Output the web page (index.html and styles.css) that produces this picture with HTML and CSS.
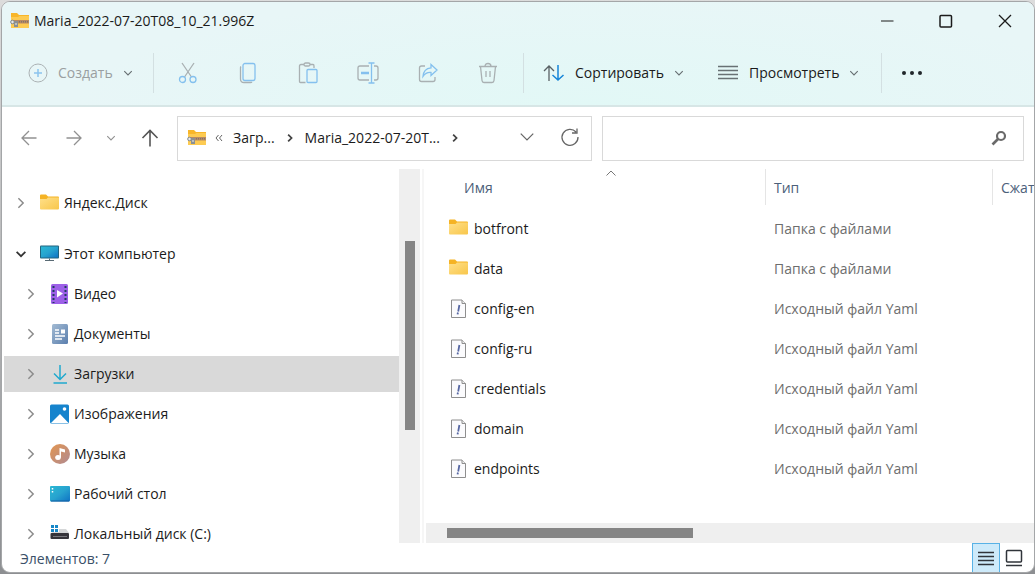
FILE: index.html
```html
<!DOCTYPE html>
<html lang="ru">
<head>
<meta charset="utf-8">
<title>Maria_2022-07-20T08_10_21.996Z</title>
<link rel="stylesheet" href="styles.css">
</head>
<body>
<svg class="defs" aria-hidden="true">
  <defs>
    <linearGradient id="g-folder" x1="0" y1="0" x2="1" y2="1"><stop offset="0" stop-color="#ffe08a"/><stop offset="1" stop-color="#f8c64a"/></linearGradient>
    <linearGradient id="g-screen" x1="0" y1="0" x2="1" y2="1"><stop offset="0" stop-color="#2bb8d4"/><stop offset=".5" stop-color="#27a3cf"/><stop offset="1" stop-color="#0f72c4"/></linearGradient>
    <linearGradient id="g-doc" x1="0" y1="0" x2="1" y2="1"><stop offset="0" stop-color="#a3bbd3"/><stop offset="1" stop-color="#5b7fae"/></linearGradient>
    <linearGradient id="g-music" x1="0" y1="0" x2="1" y2="1"><stop offset="0" stop-color="#e39650"/><stop offset="1" stop-color="#b08a92"/></linearGradient>
  </defs>
  <symbol id="folder" viewBox="0 0 20 16"><path d="M0 1.500Q0 .5 1 .5H6L8 2.500H18Q19 2.500 19 3.500V8H0Z" fill="#f5b324"/><path d="M0 5H6.500L8 3.500H19V14.500Q19 15.500 18 15.500H1Q0 15.500 0 14.500Z" fill="url(#g-folder)"/></symbol>
  <symbol id="zip" viewBox="0 0 20 16"><path d="M1 0H7L9 2H19V15H1Z" fill="#f8b62a"/><path d="M1 4H8L9.500 3H19V15H1Z" fill="#fdcb52"/><path d="M4 7H19V10.500H4Z" fill="#b98a62"/><path d="M5 8.700H19" stroke="#80746c" stroke-width="1.400" stroke-dasharray="1 1"/><circle cx="2.500" cy="9" r="1.800" fill="#e8e8e8" stroke="#7d858c"/><path d="M4.500 8H8V14H4V10.500Z" fill="#8b9093"/><path d="M5 11H7" stroke="#eee"/></symbol>
  <symbol id="chev-down" viewBox="0 0 16 16"><path d="M3 5.500L8 10.500L13 5.500"/></symbol>
  <symbol id="chev-right" viewBox="0 0 16 16"><path d="M5 2.500L10.500 8L5 13.500"/></symbol>
  <symbol id="yaml" viewBox="0 0 16 20"><path d="M.5 1H11L14.500 4.500V18.500H.5Z" fill="#fbfbfd" stroke="#8e8e8e"/><path d="M11 1V4.500H14.500" fill="#eee" stroke="#8e8e8e"/><path d="M8.400 6L7.200 12.500" stroke="#5667a3" stroke-width="1.800"/><path d="M6.900 13.500L6.600 15.300" stroke="#5667a3" stroke-width="1.800"/></symbol>
</svg>

<div class="window">
  <header class="chrome">
    <div class="titlebar">
      <svg class="icon-folder"><use href="#zip"/></svg>
      <h1 class="title">Maria_2022-07-20T08_10_21.996Z</h1>
      <button class="win-btn" aria-label="Свернуть"><svg width="16" height="16" viewBox="0 0 16 16"><path d="M2 8H14.500"/></svg></button>
      <button class="win-btn" aria-label="Развернуть"><svg width="16" height="16" viewBox="0 0 16 16" stroke-width="1.500"><rect x="2" y="2.500" width="11.500" height="11.500" rx="1"/></svg></button>
      <button class="win-btn" aria-label="Закрыть"><svg width="16" height="16" viewBox="0 0 16 16" stroke-width="1.300"><path d="M2 2L14 14M14 2L2 14"/></svg></button>
    </div>
    <div class="toolbar">
      <button class="tool tool-new muted"><svg width="20" height="20" viewBox="0 0 20 20"><circle cx="10" cy="10" r="9" stroke="#abb2b4"/><path d="M10 6V14M6 10H14" stroke="#8cc4ee" stroke-width="1.500"/></svg><span>Создать</span><svg class="caret"><use href="#chev-down"/></svg></button>
      <span class="sep"></span>
      <div class="tool-group">
        <button class="tool-icon" aria-label="Вырезать"><svg width="20" height="22" viewBox="0 0 20 22"><path d="M4 1L13.500 15M16 1L6.500 15"/><g class="blue"><circle cx="4.500" cy="17.500" r="3"/><circle cx="15" cy="17.500" r="3"/></g></svg></button>
        <button class="tool-icon" aria-label="Копировать"><svg width="20" height="22" viewBox="0 0 20 22"><path d="M3 4.500Q2.500 5 2.500 6V17Q2.500 20.500 6 20.500H12.500Q13.500 20.500 14 20"/><rect class="blue" x="5" y="1.500" width="12" height="17" rx="2"/></svg></button>
        <button class="tool-icon" aria-label="Вставить"><svg width="20" height="22" viewBox="0 0 20 22"><path d="M7.500 20.500H2.500Q1.500 20.500 1.500 19.500V4Q1.500 2.500 3 2.500H6M12 2.500H15Q16 2.500 16 4V6"/><rect x="6" y="1" width="6" height="3" rx="1.500"/><rect class="blue" x="9" y="7.500" width="10" height="13" rx="1"/></svg></button>
        <button class="tool-icon" aria-label="Переименовать"><svg width="22" height="22" viewBox="0 0 22 22"><path d="M12 4H3Q1 4 1 6V16Q1 18 3 18H12M17 4H19Q21 4 21 6V16Q21 18 19 18H17"/><path class="blue" d="M11.500 1H17.500M14.500 1V21M11.500 21H17.500"/><path class="blue" stroke-width="2.500" d="M4 11H12"/></svg></button>
        <button class="tool-icon" aria-label="Поделиться"><svg width="20" height="22" viewBox="0 0 20 22"><path d="M7 4H3.500Q1.500 4 1.500 6V17.500Q1.500 19.500 3.500 19.500H15Q17 19.500 17 17.500V15"/><path class="blue" d="M13 2.500L19 8L13 13.500V10.500Q8 10 5 14.500Q5.500 6.500 13 5.800Z"/></svg></button>
        <button class="tool-icon" aria-label="Удалить"><svg width="20" height="22" viewBox="0 0 20 22"><path d="M1 4.500H19M7 4.500Q7 1.500 10 1.500Q13 1.500 13 4.500M2.500 4.500L4 18.500Q4.200 20.500 6 20.500H14Q15.800 20.500 16 18.500L17.500 4.500M8 9V15M12 9V15"/></svg></button>
      </div>
      <span class="sep"></span>
      <button class="tool tool-sort"><svg width="22" height="18" viewBox="0 0 22 18"><path d="M6 17V2M1 7L6 2L11 7" stroke="#596064" stroke-width="1.300"/><path d="M15 1V16M9.500 11L15 16L20.500 11" stroke="#1585d8" stroke-width="1.500"/></svg><span>Сортировать</span><svg class="caret"><use href="#chev-down"/></svg></button>
      <button class="tool tool-view"><svg width="22" height="18" viewBox="0 0 22 18"><path d="M1 2.500H21M1 6.500H21M1 10.500H21M1 14.500H21" stroke="#687174" stroke-width="1.300"/></svg><span>Просмотреть</span><svg class="caret"><use href="#chev-down"/></svg></button>
      <span class="sep"></span>
      <button class="tool-icon tool-more" aria-label="Дополнительно"><svg width="22" height="6" viewBox="0 0 22 6"><g fill="#20262a" stroke="none"><circle cx="3" cy="3" r="2"/><circle cx="11" cy="3" r="2"/><circle cx="19" cy="3" r="2"/></g></svg></button>
    </div>
  </header>

  <nav class="navbar">
    <div class="history">
      <button class="back" aria-label="Назад"><svg width="16" height="16" viewBox="0 0 16 16"><path d="M15.500 8H1M8 1L1 8L8 15"/></svg></button>
      <button class="forward" aria-label="Вперёд"><svg width="16" height="16" viewBox="0 0 16 16"><path d="M.5 8H15M8 1L15 8L8 15"/></svg></button>
      <button class="recent" aria-label="Последние расположения"><svg class="caret"><use href="#chev-down"/></svg></button>
      <button class="up" aria-label="Вверх"><svg width="18" height="18" viewBox="0 0 18 18"><path d="M9 17.500V1.500M1.500 9L9 1.500L16.500 9"/></svg></button>
    </div>
    <div class="address">
      <svg class="icon-folder"><use href="#zip"/></svg>
      <svg class="more" viewBox="0 0 8 8"><path d="M3.500 1L1 4L3.500 7M7 1L4.500 4L7 7"/></svg>
      <a class="crumb" href="#">Загр...</a>
      <svg class="crumb-sep"><use href="#chev-right"/></svg>
      <a class="crumb" href="#">Maria_2022-07-20T...</a>
      <svg class="crumb-sep"><use href="#chev-right"/></svg>
      <button class="addr-btn" aria-label="Предыдущие расположения"><svg width="20" height="20" viewBox="0 0 16 16"><path d="M3 4.500L8 9.500L13 4.500"/></svg></button>
      <button class="addr-btn" aria-label="Обновить"><svg width="20" height="20" viewBox="0 0 20 20"><path d="M16 4A8 8 0 1 0 18 9M17 .5V5H12" stroke-width="1.300"/></svg></button>
    </div>
    <label class="search">
      <input type="text" aria-label="Поиск">
      <svg width="16" height="16" viewBox="0 0 16 16"><circle cx="10" cy="6" r="4" stroke-width="2.200"/><path d="M7 9L1.500 14.500" stroke-width="2.600"/></svg>
    </label>
  </nav>

  <main class="content">
    <aside class="sidebar">
      <ul class="tree">
        <li class="node root"><svg class="arrow"><use href="#chev-right"/></svg><svg class="icon"><use href="#folder" x="0" y="1" width="20" height="16"/></svg>Яндекс.Диск</li>
        <li class="node"><svg class="arrow open"><use href="#chev-down"/></svg><svg class="icon" viewBox="0 0 20 20"><rect y="1.500" width="19" height="13" rx="1" fill="#22647f"/><rect x="1" y="2.500" width="17" height="11" fill="url(#g-screen)"/><path d="M9.500 14.500V16.500M5 16.500H14" stroke="#596a74"/></svg>Этот компьютер</li>
        <li class="node child"><svg class="arrow"><use href="#chev-right"/></svg><svg class="icon" viewBox="0 0 20 20"><rect x="1" width="17" height="20" rx="1.500" fill="#9d60e8"/><path d="M3.500 2V19M15.500 2V19" stroke="#203c60" stroke-width="2" stroke-dasharray="2 2"/><path d="M7 6L13 9.500L7 13.500Z" fill="#fff"/></svg>Видео</li>
        <li class="node child"><svg class="arrow"><use href="#chev-right"/></svg><svg class="icon" viewBox="0 0 20 20"><rect x="2" width="16" height="20" rx="1.500" fill="url(#g-doc)"/><path d="M5 6H9M5 9H9M5 12H15M5 15H12" stroke="#fff" stroke-width="1.300"/><rect x="11" y="5.500" width="4" height="4" fill="#fff"/></svg>Документы</li>
        <li class="node child selected"><svg class="arrow"><use href="#chev-right"/></svg><svg class="icon" viewBox="0 0 20 20"><path d="M10 1V15M4 9.500L10 15.500L16 9.500M3.500 19H17" fill="none" stroke="#20a9ce" stroke-width="1.500"/></svg>Загрузки</li>
        <li class="node child"><svg class="arrow"><use href="#chev-right"/></svg><svg class="icon" viewBox="0 0 20 20"><rect y=".5" width="19" height="19" rx="1.500" fill="#1684cd"/><path d="M1 19L10 10L18.500 19Z" fill="#fff"/><circle cx="14.500" cy="5" r="1.800" fill="#fff"/></svg>Изображения</li>
        <li class="node child"><svg class="arrow"><use href="#chev-right"/></svg><svg class="icon" viewBox="0 0 20 20"><circle cx="10" cy="10" r="10" fill="url(#g-music)"/><ellipse cx="8" cy="13.500" rx="2.800" ry="2.500" fill="#fff"/><path d="M9.500 13V4L15 5.500V8.500L11 7.500V14Z" fill="#fff"/></svg>Музыка</li>
        <li class="node child"><svg class="arrow"><use href="#chev-right"/></svg><svg class="icon" viewBox="0 0 20 20"><rect y="2" width="20" height="15.500" rx="1" fill="url(#g-screen)"/><path d="M2.500 4V9" stroke="#fff" stroke-width="1.500" stroke-dasharray="1.500 1.500"/><path d="M1 17H19" stroke="#145ca0"/></svg>Рабочий стол</li>
        <li class="node child"><svg class="arrow"><use href="#chev-right"/></svg><svg class="icon" viewBox="0 0 20 20"><path d="M1 1H4V4H1ZM5 1H8V4H5ZM1 5H4V8H1ZM5 5H8V8H5Z" fill="#1687c8"/><path d="M9 5H16L19 9H1L3 8H9Z" fill="#d5d7d8"/><rect x=".5" y="9" width="18.500" height="6" rx="1" fill="#35343a"/><path d="M3 12.500H17" stroke="#77777d"/></svg>Локальный диск (C:)</li>
      </ul>
      <div class="vscroll"><div class="vthumb"></div></div>
    </aside>
    <section class="files">
      <table class="list">
        <thead>
          <tr>
            <th class="col-name"><div class="head">Имя<svg class="sort-mark" viewBox="0 0 12 8"><path d="M1.500 6.500L6 2L10.500 6.500"/></svg></div></th>
            <th class="col-type"><div class="head">Тип</div></th>
            <th class="col-size"><div class="head">Сжат</div></th>
          </tr>
        </thead>
        <tbody>
          <tr><td><div class="file"><svg class="icon"><use href="#folder" width="20" height="16"/></svg>botfront</div></td><td class="type">Папка с файлами</td><td></td></tr>
          <tr><td><div class="file"><svg class="icon"><use href="#folder" width="20" height="16"/></svg>data</div></td><td class="type">Папка с файлами</td><td></td></tr>
          <tr><td><div class="file"><svg class="icon"><use href="#yaml" x="2" width="16" height="20"/></svg>config-en</div></td><td class="type">Исходный файл Yaml</td><td></td></tr>
          <tr><td><div class="file"><svg class="icon"><use href="#yaml" x="2" width="16" height="20"/></svg>config-ru</div></td><td class="type">Исходный файл Yaml</td><td></td></tr>
          <tr><td><div class="file"><svg class="icon"><use href="#yaml" x="2" width="16" height="20"/></svg>credentials</div></td><td class="type">Исходный файл Yaml</td><td></td></tr>
          <tr><td><div class="file"><svg class="icon"><use href="#yaml" x="2" width="16" height="20"/></svg>domain</div></td><td class="type">Исходный файл Yaml</td><td></td></tr>
          <tr><td><div class="file"><svg class="icon"><use href="#yaml" x="2" width="16" height="20"/></svg>endpoints</div></td><td class="type">Исходный файл Yaml</td><td></td></tr>
        </tbody>
      </table>
      <div class="hscroll"><div class="hthumb"></div></div>
    </section>
  </main>

  <footer class="status">
    <span class="count">Элементов: 7</span>
    <button class="view-btn active" aria-label="Таблица"><svg width="18" height="18" viewBox="0 0 18 18"><path d="M1 3.500H17M1 7.500H17M1 11.500H17M1 15.500H17"/></svg></button>
    <button class="view-btn" aria-label="Крупные значки"><svg width="18" height="18" viewBox="0 0 18 18"><rect x="1.500" y="1.500" width="15" height="11.500" rx="1"/><path d="M1 16.500H17"/></svg></button>
  </footer>
</div>
</body>
</html>
```
FILE: styles.css
```css
* { box-sizing: border-box; }

body {
  margin: 0;
  height: 100vh;
  padding: 1px 0 1px 1px;
  background: linear-gradient(#dcdcdc, #8d8f92);
  font: 14px/20px "Open Sans", "Noto Sans", sans-serif;
  color: #1b1b1b;
}

svg { flex: none; fill: none; stroke: currentColor; }
.icon, .icon-folder { stroke: none; }
.defs { position: absolute; width: 0; height: 0; }

button {
  display: flex;
  align-items: center;
  justify-content: center;
  padding: 0;
  border: 0;
  background: none;
  font: inherit;
  color: inherit;
}

.window {
  display: flex;
  flex-direction: column;
  height: 100%;
  overflow: hidden;
  border: 1px solid #a4a6a8;
  border-radius: 9px;
  background: #fff;
}

.icon-folder { width: 20px; height: 16px; }
.caret { width: 12px; height: 12px; stroke-width: 1.500; }

/* Title bar and commands */
.chrome {
  border-bottom: 2px solid #d7e6e6;
  background: radial-gradient(ellipse 50% 110% at 57% 100%, #e2f8f6, #e8f6f7);
}
.titlebar { display: flex; align-items: center; height: 37px; padding: 0 0 0 8px; }
.title { flex: 1; margin: 0 0 0 4px; font-size: inherit; font-weight: 400; }
.win-btn { width: 59px; height: 36px; }

.toolbar { display: flex; align-items: center; height: 66px; padding: 2px 0 0 26px; }
.tool { gap: 10px; height: 40px; justify-content: flex-start; }
.tool .caret { margin-left: -1px; color: #666e71; }
.tool-new { width: 106px; }
.muted { color: #9a9fa1; }
.sep { width: 1px; height: 40px; margin: 0 19px; background: #d3e0e2; }
.sep:first-of-type { margin: 0 14px 0 19px; }
.tool-group { display: flex; gap: 20px; margin-right: -4px; }
.tool-icon { width: 40px; height: 40px; color: #a9b0b2; stroke-width: 1.3; }
.blue { stroke: #84c0ee; }
.tool-sort { width: 141px; margin-right: 33px; }
.tool-view { width: 139px; margin-right: 6px; }
.tool-more { margin-left: -9px; }

/* Navigation */
.navbar { display: flex; align-items: center; gap: 10px; height: 62px; padding: 0 10px 0 3px; }
.history { display: flex; flex: none; margin-right: -6px; color: #919191; stroke-width: 1.300; }
.history button { height: 32px; }
.history .back { width: 48px; }
.history .forward { width: 42px; }
.history .recent { width: 32px; }
.history .up { width: 46px; color: #555; stroke-width: 1.600; }
.address, .search { display: flex; align-items: center; height: 45px; border: 1px solid #d9d9d9; }
.address { width: 415px; padding-left: 9px; }
.more { width: 8px; height: 8px; margin: 0 10px 0 8px; color: #666; }
.crumb { color: inherit; text-decoration: none; white-space: nowrap; }
.crumb-sep { width: 10px; height: 10px; margin: 0 10px; stroke-width: 2.800; color: #444; }
.addr-btn { width: 43px; height: 43px; color: #666; }
.address .crumb-sep + .addr-btn { margin-left: auto; }
.search { flex: 1; padding-right: 16px; color: #6a6a6a; }
.search input { flex: 1; min-width: 0; height: 100%; border: 0; outline: 0; background: none; font: inherit; }

/* Content */
.content { display: flex; flex: 1; min-height: 0; }
.sidebar { display: flex; flex: none; width: 422px; border-right: 2px solid #f6f6f6; }
.tree {
  display: flex;
  flex: 1;
  flex-direction: column;
  gap: 4px;
  margin: 0;
  padding: 16px 0 0 2px;
  overflow: hidden;
  list-style: none;
}
.node { display: flex; flex: none; align-items: center; height: 36px; padding-left: 10px; white-space: nowrap; }
.node.root { margin-bottom: 11px; }
.node.child { padding-left: 20px; }
.node.selected { background: #d9d9d9; }
.arrow { width: 14px; height: 14px; margin-right: 12px; color: #8b8b8b; stroke-width: 1.700; }
.arrow.open { color: #333; stroke-width: 2; }
.icon { width: 20px; height: 20px; margin-right: 4px; }
.vscroll { width: 21px; margin-right: 2px; padding: 72px 5px 0 6px; background: #efefef; }
.vthumb { height: 189px; background: #858585; }

.files { display: flex; flex: 1; flex-direction: column; min-width: 0; padding-left: 2px; overflow: hidden; }
.list { width: 740px; table-layout: fixed; border-collapse: collapse; }
.list th, .list td { padding: 0; text-align: left; font-weight: 400; }
.list th { height: 40px; vertical-align: top; }
.list td { height: 40px; }
.col-name { width: 340px; }
.col-type { width: 227px; }
.head { position: relative; height: 36px; padding: 9px 8px; border-right: 1px solid #e5e5e5; color: #4c607a; white-space: nowrap; }
.col-name .head { margin-left: 30px; }
.sort-mark { position: absolute; top: 0; left: 50%; width: 12px; height: 8px; margin-left: -6px; color: #777; }
.file { display: flex; align-items: center; padding-left: 23px; }
.file .icon { margin-right: 5px; }
.list .type { padding-left: 8px; color: #6d6d6d; }
.hscroll { margin-top: auto; padding: 5px 21px; background: #efefef; }
.hthumb { width: 246px; height: 10px; background: #858585; }

/* Status bar */
.status { display: flex; flex: none; align-items: center; height: 29px; padding-right: 6px; }
.count { flex: 1; padding: 3px 0 0 18px; color: #3a5068; }
.view-btn { width: 28px; height: 29px; color: #30343a; stroke-width: 1.500; }
.view-btn.active { border: 1px solid #58b2e6; border-bottom: 0; background: #cdeafa; }
```
